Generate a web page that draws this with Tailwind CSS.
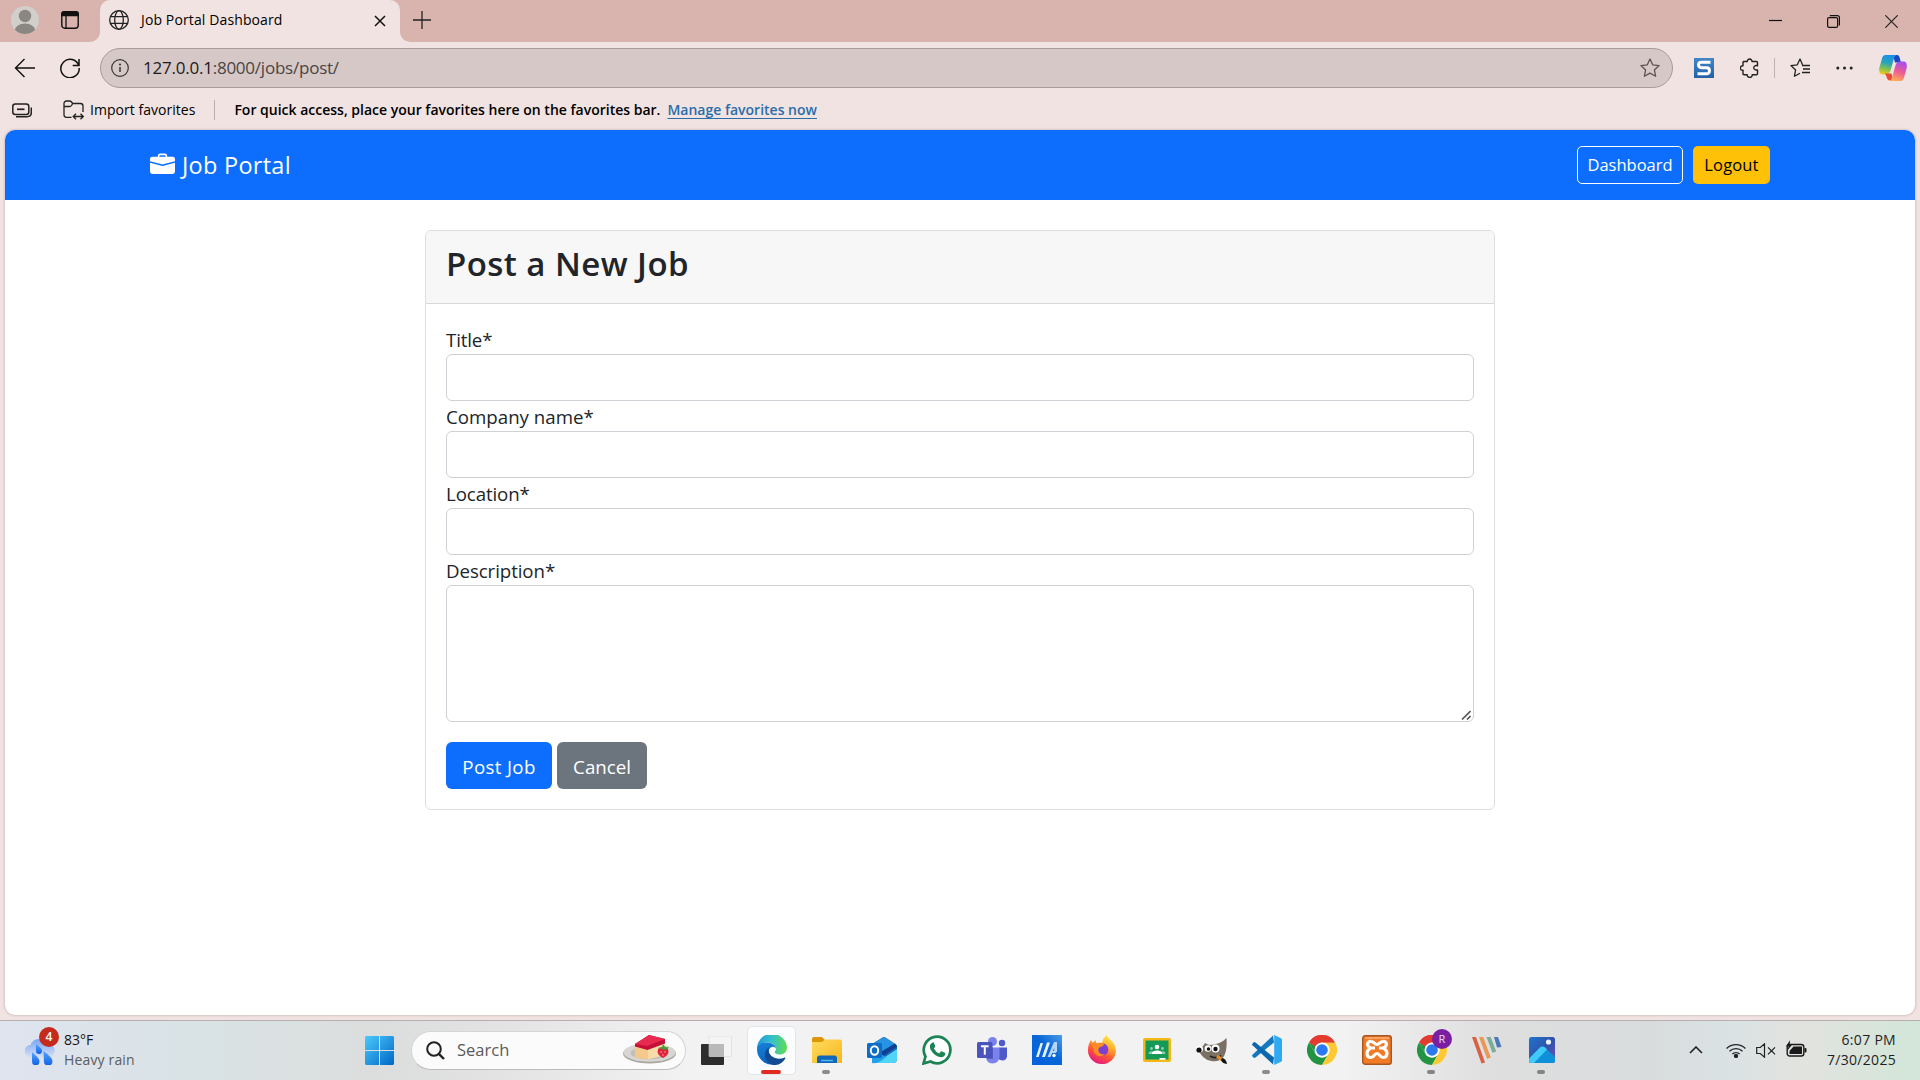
<!DOCTYPE html>
<html lang="en">
<head>
<meta charset="utf-8">
<title>Job Portal Dashboard</title>
<script src="https://cdn.jsdelivr.net/npm/@tailwindcss/browser@4"></script>
</head>
<body class="w-[1920px] h-[1080px] overflow-hidden flex flex-col bg-[#f1e3e1] font-['Open_Sans','Noto_Sans',sans-serif] text-black">

<!-- Shared icon definitions -->
<svg class="hidden">
  <symbol id="chrome" viewBox="0 0 48 48">
    <circle cx="24" cy="24" r="24" fill="#fff"/>
    <path d="M3.2 12A24 24 0 0 1 44.8 12H24a12 12 0 0 0-10.4 6z" fill="#e33b2e"/>
    <path d="M3.2 12A24 24 0 0 0 24 48L34.4 30A12 12 0 0 1 13.6 30z" fill="#229342"/>
    <path d="M44.8 12A24 24 0 0 1 24 48L34.4 30A12 12 0 0 0 24 12z" fill="#fcc934"/>
    <path d="M3.2 12L13.6 30L24 24z" fill="#229342"/>
    <path d="M3.2 12A24 24 0 0 1 44.8 12H24L13.6 18z" fill="#e33b2e"/>
    <circle cx="24" cy="24" r="12" fill="#fff"/><circle cx="24" cy="24" r="9.3" fill="#2b78f0"/>
  </symbol>
</svg>

<!-- Tab strip -->
<header class="h-[42px] shrink-0 flex bg-[#f1e3e1]">
  <div class="w-[100px] flex items-center pl-[11px] gap-[22px] bg-[#d9b3ad] rounded-br-[10px]">
    <svg class="size-7 -mt-[2px]" viewBox="0 0 28 28"><defs><clipPath id="av"><circle cx="14" cy="14" r="14"/></clipPath></defs><circle cx="14" cy="14" r="14" fill="#d2cfcb"/><g clip-path="url(#av)" fill="#8a8783"><circle cx="14" cy="10" r="6.2"/><ellipse cx="14" cy="25" rx="10.5" ry="7.5"/></g></svg>
    <svg class="size-[18px] -mt-[2px]" viewBox="0 0 18 18"><rect x=".8" y=".8" width="16.4" height="16.4" rx="3" fill="none" stroke="#111" stroke-width="1.4"/><path d="M0 5.3V3a3 3 0 0 1 3-3h12a3 3 0 0 1 3 3v2.300z" fill="#111"/><path d="M5 5v12" stroke="#111" stroke-width="1.3"/></svg>
  </div>
  <div class="w-[300px] flex bg-[#d9b3ad]">
    <div class="w-full flex items-center pl-[9px] pr-[14px] bg-[#f1e3e1] rounded-t-[10px]">
      <svg class="size-5 -mt-[3px]" viewBox="0 0 20 20" fill="none" stroke="#222" stroke-width="1.3"><circle cx="10" cy="10" r="9.300"/><ellipse cx="10" cy="10" rx="4.300" ry="9.300"/><path d="M1.500 6.700h17M1.500 13.300h17"/></svg>
      <span class="ml-3 -mt-1 text-[14px] tracking-[0.12px] whitespace-nowrap">Job Portal Dashboard</span>
      <svg class="ml-auto size-[12px] -mt-[1px]" viewBox="0 0 12 12" stroke="#111" stroke-width="1.500"><path d="M1 1l10 10M11 1L1 11"/></svg>
    </div>
  </div>
  <div class="flex-1 flex items-center pl-[13px] pr-[22px] bg-[#d9b3ad] rounded-bl-[10px]">
    <svg class="size-[18px] -mt-[3px]" viewBox="0 0 18 18" stroke="#222" stroke-width="1.300"><path d="M9 0v18M0 9h18"/></svg>
    <div class="ml-auto flex items-center gap-[45px]">
      <svg class="w-[13px] h-[13px]" viewBox="0 0 13 13" stroke="#111" stroke-width="1.200"><path d="M0 5.500h13"/></svg>
      <svg class="w-[13px] h-[13px]" viewBox="0 0 13 13" fill="none" stroke="#111" stroke-width="1.200"><rect x=".6" y="2.600" width="10" height="9.800" rx="1.500"/><path d="M2.800.6h7.600a2 2 0 0 1 2 2v7.800"/></svg>
      <svg class="w-[13px] h-[13px]" viewBox="0 0 13 13" stroke="#222" stroke-width="1.200"><path d="M.3.300l12.400 12.400M12.700.300L.3 12.700"/></svg>
    </div>
  </div>
</header>

<!-- Address bar row -->
<div class="h-[52px] shrink-0 flex items-center pl-[14px]">
  <svg class="w-[21px] h-5" viewBox="0 0 21 20" fill="none" stroke="#111" stroke-width="1.400"><path d="M21 10H1.500M10.500 1L1.500 10l9 9"/></svg>
  <svg class="ml-[25px] w-[20px] h-[20px]" viewBox="0 0 20 20" fill="none" stroke="#111" stroke-width="1.500"><path d="M18.700 7.500A9.200 9.200 0 1 0 19.200 10M19 1v6.500h-6.300"/></svg>
  <div class="ml-5 w-[1573px] h-10 flex items-center rounded-full border border-[#a89b9a] bg-[#d6c8c7] pl-[10px] pr-3">
    <svg class="size-[18px]" viewBox="0 0 18 18" fill="none" stroke="#3a3433" stroke-width="1.200"><circle cx="9" cy="9" r="8.300"/><path d="M9 8v5" stroke-width="1.500"/><circle cx="9" cy="5.500" r=".5"/></svg>
    <span class="ml-[14px] -mt-[1px] text-[17px] tracking-[-0.23px] text-[#4a4443] whitespace-nowrap"><span class="text-[#1c1a1a]">127.0.0.1</span>:8000/jobs/post/</span>
    <svg class="ml-auto size-5" viewBox="0 0 20 20" fill="none" stroke="#5c5453" stroke-width="1.300" stroke-linejoin="round"><path d="M10 1l2.700 5.800 6.400.8-4.700 4.300 1.200 6.300L10 15.100l-5.600 3.100 1.200-6.300L.9 7.600l6.400-.8z"/></svg>
  </div>
  <svg class="ml-[21px] size-5" viewBox="0 0 20 20"><defs><linearGradient id="sg" x2="0" y2="1"><stop stop-color="#4387c8"/><stop offset="1" stop-color="#245fa8"/></linearGradient></defs><rect width="20" height="20" fill="url(#sg)"/><path d="M16.500 4.200H7.500q-3 0-3 2.500t3 3.100h5q3 0 3 3t-3 3H3.500" fill="none" stroke="#fff" stroke-width="2.900"/></svg>
  <svg class="ml-[26px] size-5" viewBox="0 0 20 20" fill="none" stroke="#222" stroke-width="1.400" stroke-linejoin="round"><path d="M3 3.500h4.300C7 .2 12.300.200 12 3.500h4.500q1 0 1 1v3.200c-5-1.200-5 5.300 0 4.200v3.800q0 1-1 1H12.200c.3 3.600-5.200 3.600-5 0H4q-1 0-1-1v-3.500C-.6 12.700-.6 7.500 3 7.700V4.500q0-1 1-1"/></svg>
  <div class="ml-[14px] w-px h-5 bg-[#bfb2b1]"></div>
  <svg class="ml-[15px] w-[21px] h-5" viewBox="0 0 21 20" fill="none" stroke="#222" stroke-width="1.300" stroke-linejoin="round"><path d="M12.500 6.800L10 1 7.300 6.800.9 7.600l4.700 4.300-1.200 6.300L10 15.200M12 7.500h8M13 11h7M12 14.500h8" /></svg>
  <svg class="ml-[25px] w-[17px] h-5" viewBox="0 0 17 20" fill="#222"><circle cx="1.800" cy="10" r="1.500"/><circle cx="8.500" cy="10" r="1.500"/><circle cx="15.200" cy="10" r="1.500"/></svg>
  <svg class="ml-[26px] w-7 h-[26px]" viewBox="0 0 28 26">
    <defs>
      <linearGradient id="c1" x1=".5" x2=".3" y2="1"><stop stop-color="#1a8fe8"/><stop offset=".4" stop-color="#27a5b8"/><stop offset=".75" stop-color="#8fc544"/><stop offset="1" stop-color="#f4ca1d"/></linearGradient>
      <linearGradient id="c2" x1=".6" x2=".3" y2="1"><stop stop-color="#a64df0"/><stop offset=".5" stop-color="#ee5c92"/><stop offset="1" stop-color="#ffb057"/></linearGradient>
    </defs>
    <path d="M14 0h4c2 0 2.500 2 3 4l1 3.500h-6z" fill="#1b46c4"/>
    <path d="M6.500 0h11c-2 1-2.500 3-3.300 6l-2.500 9c-1 3.500-3 4.500-5.700 4.500H3.500C.5 19.500-.3 16.500.3 13L3 3.500C3.500 1.500 4.500 0 6.500 0z" fill="url(#c1)"/>
    <path d="M6 18.500h6.500l1.500 7h-3c-2.300 0-3-2-3.600-4z" fill="#ea4d35"/>
    <path d="M21.500 26h-11c2-1 2.500-3 3.300-6l2.500-9c1-3.500 3-4.500 5.700-4.500h2.500c3 0 3.800 3 3.200 6.500L25 22.500c-.5 2-1.500 3.500-3.500 3.500z" fill="url(#c2)"/>
  </svg>
</div>

<!-- Favorites bar -->
<div class="h-9 shrink-0 flex items-center pl-3 pb-[7px] text-[14px] whitespace-nowrap">
  <svg class="mt-[3px] w-5 h-[15px]" viewBox="0 0 20 15" fill="none" stroke="#222" stroke-width="1.500"><rect x=".8" y="1" width="16" height="10.500" rx="2.500"/><path d="M5 6.300h7.500" stroke-width="1.700"/><path d="M4 13.700h11c3 0 4.300-1.400 4.300-4V4.500"/></svg>
  <svg class="ml-[31px] mt-[2px] w-[21px] h-5" viewBox="0 0 21 20" fill="none" stroke="#222" stroke-width="1.300"><path d="M8.500 17.300H3.500a2.500 2.500 0 0 1-2.500-2.500V3.500A2.500 2.500 0 0 1 3.500 1h3q1.200 0 2 1l1.200 1.500h7.800A2.500 2.500 0 0 1 20 6v6M1 6.500h5.800q1 0 1.700-1l1.200-2M10.500 16.500h9.500M13 13.700l-2.800 2.800L13 19.300M17.500 13.700l2.800 2.800-2.800 2.800"/></svg>
  <span class="ml-[6px] mt-[2px] tracking-[0.03px]">Import favorites</span>
  <div class="ml-[19px] mt-[2px] w-px h-5 bg-[#b9acab]"></div>
  <span class="ml-[19px] mt-[2px] font-semibold tracking-[0px]">For quick access, place your favorites here on the favorites bar.</span>
  <a class="ml-[7px] mt-[2px] font-semibold text-[#2a6dab] underline decoration-1 underline-offset-3">Manage favorites now</a>
</div>

<!-- Web page -->
<main class="mx-[5px] h-[885px] shrink-0 bg-white rounded-[10px] overflow-hidden shadow-[0_0_3px_#b9a5a3]">
  <nav class="h-[70px] flex items-center px-[145px] bg-[#0d6efd] text-white">
    <svg class="w-[25px] h-[25px] -mt-[1px]" viewBox="0 0 16 16" fill="currentColor"><path d="M6.500 1A1.500 1.500 0 0 0 5 2.500V3H1.500A1.500 1.500 0 0 0 0 4.500v1.384l7.614 2.030a1.500 1.500 0 0 0 .772 0L16 5.884V4.500A1.500 1.500 0 0 0 14.500 3H11v-.5A1.500 1.500 0 0 0 9.500 1zm0 1h3a.5.500 0 0 1 .5.500V3H6v-.5a.5.500 0 0 1 .5-.5"/><path d="M0 12.500A1.500 1.500 0 0 0 1.500 14h13a1.500 1.500 0 0 0 1.500-1.500V6.850L8.129 8.947a.5.500 0 0 1-.258 0L0 6.850z"/></svg>
    <span class="ml-[7px] mt-[2px] text-[23.500px] tracking-[0.27px]">Job Portal</span>
    <a class="ml-auto w-[106px] h-[38px] flex items-center justify-center rounded-[5px] border border-white text-[16.500px] pt-px">Dashboard</a>
    <a class="ml-[10px] w-[77px] h-[38px] flex items-center justify-center rounded-[5px] bg-[#ffc107] text-black text-[16.500px] tracking-[0.15px] pt-px">Logout</a>
  </nav>
  <section class="mt-[30px] mx-auto w-[1070px] h-[580px] rounded-[6px] border border-[#dedfe0] overflow-hidden text-[#212529]">
    <div class="h-[73px] px-5 pt-[9px] bg-[#f7f7f7] border-b border-[#d8d9da]">
      <h2 class="text-[33px] leading-[48px] font-semibold tracking-[0.45px]">Post a New Job</h2>
    </div>
    <form class="px-5 pt-5 text-[18.700px]">
      <label class="block h-[30px] leading-[32px] tracking-[-0.15px]">Title*</label>
      <input class="block w-full h-[47px] rounded-[6px] border border-[#ced2d6]">
      <label class="block h-[30px] leading-[32px]">Company name*</label>
      <input class="block w-full h-[47px] rounded-[6px] border border-[#ced2d6]">
      <label class="block h-[30px] leading-[32px] tracking-[-0.1px]">Location*</label>
      <input class="block w-full h-[47px] rounded-[6px] border border-[#ced2d6]">
      <label class="block h-[30px] leading-[32px] tracking-[-0.08px]">Description*</label>
      <div class="w-full h-[137px] flex items-end justify-end rounded-[6px] border border-[#ced2d6] pr-[2px] pb-[1px]">
        <svg class="w-[10px] h-[10px]" viewBox="0 0 10 10" stroke="#555" stroke-width="1.600"><path d="M1 9.500L9.500 1M6 9.500l3.500-3.500"/></svg>
      </div>
      <div class="mt-5 flex gap-[5px] text-white">
        <button type="button" class="w-[106px] h-[47px] rounded-[6px] bg-[#0d6efd] pt-[3px] tracking-[0.35px]">Post Job</button>
        <button type="button" class="w-[90px] h-[47px] rounded-[6px] bg-[#6c757d] pt-[3px]">Cancel</button>
      </div>
    </form>
  </section>
</main>
<div class="h-[5px] shrink-0"></div>

<!-- Taskbar -->
<footer class="h-[60px] shrink-0 flex items-center shadow-[inset_0_1px_0_#b5afaf] bg-[linear-gradient(90deg,#dfe4ef_0%,#d9e3e5_10%,#dcdddd_20%,#e3e3e3_26%,#f2f2f3_36%,#f2f2f2_70%,#dedede_78%,#d9dcdd_86%,#dae2e4_90%,#e2e3df_94%,#d2e6d8_100%)]">
  <div class="relative w-[352px] h-full flex items-center pl-[25px] gap-[9px]">
    <svg class="w-[30px] h-[28px] mt-[2px]" viewBox="0 0 30 28"><defs><linearGradient id="cl" x2="0" y2="1"><stop stop-color="#7aa5f2"/><stop offset="1" stop-color="#d3def8"/></linearGradient><linearGradient id="dr" x2="0" y2="1"><stop stop-color="#56a3ff"/><stop offset="1" stop-color="#0f62e8"/></linearGradient></defs><path d="M6 20a6 6 0 0 1-.5-12A9 9 0 0 1 22 7a6.500 6.500 0 0 1 2 13z" fill="url(#cl)"/><g fill="url(#dr)"><path d="M7 15c3 3 7.500 6 7.500 9.500a3.700 3.700 0 0 1-7.500 0z"/><path d="M18.500 14c3.500 3 9 6.500 9 10.500a4.300 4.300 0 0 1-8.600 0z"/><path d="M11 7c3 2.500 6 4.500 6 7a3 3 0 0 1-6 0z"/></g></svg>
    <span class="absolute left-[39px] top-[7px] size-5 rounded-full bg-[#c42b1c] text-white text-[12px] font-semibold leading-5 text-center">4</span>
    <div class="text-[14px] leading-5 -mt-[1px]">
      <div class="text-[#151515]">83°F</div>
      <div class="text-[#5b5e60] tracking-[0.15px]">Heavy rain</div>
    </div>
  </div>
  <div class="w-[55px] flex justify-center">
    <svg class="size-[29px]" viewBox="0 0 29 29"><defs><linearGradient id="wn" x2="1" y2="1"><stop stop-color="#4cc9fb"/><stop offset="1" stop-color="#0067c7"/></linearGradient></defs><path d="M1 0h13v14H0V1zM15 0h13l1 1v13H15zM0 15h14v14H1l-1-1zM15 15h14v13l-1 1H15z" fill="url(#wn)"/></svg>
  </div>
  <div class="ml-1 w-[275px] h-[39px] flex items-center pl-[14px] pr-[9px] rounded-full border border-[#d5d5d5] border-b-[#bcbcbc] bg-[#fbfbfb]">
    <svg class="size-[19px]" viewBox="0 0 19 19" fill="none" stroke="#222" stroke-width="2"><circle cx="8" cy="8" r="6.800"/><path d="M12.800 12.800l5.200 5.200" stroke-width="2.400"/></svg>
    <span class="ml-[12px] text-[16.500px] text-[#5a5a5a]">Search</span>
    <svg class="ml-auto w-[53px] h-[30px]" viewBox="0 0 53 30"><ellipse cx="26.500" cy="18.500" rx="26.500" ry="10" fill="#aaa69f"/><ellipse cx="26.500" cy="17.500" rx="26" ry="9.300" fill="#d8d6d2"/><ellipse cx="26.500" cy="18" rx="19" ry="6.500" fill="#c2bfb8"/><path d="M12 10l13 4v10.500L12 22.500z" fill="#f4c98a"/><path d="M25 14l17-6v12l-17 4.500z" fill="#f8dca8"/><path d="M12 9L26 0l16 4v4.500L24.500 15 12 11.500z" fill="#c40f38"/><path d="M12 9L26 0l16 4-18 7z" fill="#e82a50"/><path d="M35 14q5-4 10 0 2 6-5 9-7-3-5-9z" fill="#dd2440"/><path d="M35 13l4-1 1-3 2 3 4 .5-3 2.500-4-1z" fill="#459b3c"/><g fill="#ffb3a0"><circle cx="38" cy="17" r=".7"/><circle cx="42" cy="17" r=".7"/><circle cx="40" cy="20" r=".7"/></g></svg>
  </div>

  <div class="ml-[3px] h-full flex items-center">
    <!-- Task view -->
    <div class="w-[55px] h-full flex items-center justify-center"><svg class="w-[31px] h-[29px]" viewBox="0 0 31 29"><rect x="0" y="8" width="23" height="21" rx="1" fill="#2d2d2d"/><rect x="8" y="0" width="22.500" height="20.500" rx="1" fill="#f4f4f4" stroke="#d8d8d8" stroke-width=".6"/><path d="M8 8h15v12.500H8z" fill="#b9b9b9"/></svg></div>
    <!-- Edge -->
    <div class="relative w-[55px] h-full flex items-center justify-center">
      <div class="size-[49px] flex items-center justify-center rounded-[5px] border border-[#e3e5e6] bg-[#fafcfd]">
        <svg class="size-[30px]" viewBox="0 0 30 30"><defs><linearGradient id="e1" y1=".3" x2="1" y2=".4"><stop stop-color="#2693d8"/><stop offset=".45" stop-color="#31bfd0"/><stop offset="1" stop-color="#5fdb56"/></linearGradient><linearGradient id="e2" x2=".4" y2="1"><stop stop-color="#1683d8"/><stop offset="1" stop-color="#0b62bd"/></linearGradient></defs><path d="M0 15A15 15 0 0 1 30 12.500c0 4.500-3.300 7-7 7-3.500 0-5.300-1-5.300-2.200 0-1 1.300-1.300 1.300-3.500C19 10 15 7.500 10.500 7.500 5 7.500 1 11 0 15z" fill="url(#e1)"/><path d="M0 15C0 10 5 6.800 10.500 7.500 16 8 19 10.800 19 13.500c-2-3.300-7-1.500-7.500 3-.6 6 4.500 12 11 11A15 15 0 0 1 0 15z" fill="url(#e2)"/><path d="M11.700 12.500C5 17.500 8 29 17 30c5 .3 9-2.500 11.300-6.500.4-.8-.3-1.200-1-.8C20 26 11 21.500 11.700 14z" fill="#134a92"/></svg>
      </div>
      <i class="absolute left-[17px] bottom-[6px] w-5 h-1 rounded-full bg-[#e22b20]"></i>
    </div>
    <!-- Explorer -->
    <div class="relative w-[55px] h-full flex items-center justify-center">
      <svg class="w-[30px] h-[28px]" viewBox="0 0 30 28"><defs><linearGradient id="fo" x2="1" y2="1"><stop stop-color="#ffdc61"/><stop offset="1" stop-color="#f7b61b"/></linearGradient></defs><path d="M0 3q0-2 2-2h8l4 4v6H0z" fill="#dc9708"/><path d="M0 6h10l3-2.500h15q2 0 2 2V27H0z" fill="url(#fo)"/><path d="M5 27v-5q0-2.500 2.500-2.500h15Q25 19.500 25 22v5z" fill="#0e67b8"/><path d="M9 24.500h12" stroke="#56b7ee" stroke-width="1.500"/></svg>
      <i class="absolute left-[23px] bottom-[6px] w-2 h-1 rounded-full bg-[#8b8b8b]"></i>
    </div>
    <!-- Outlook -->
    <div class="w-[55px] h-full flex items-center justify-center"><svg class="w-[30px] h-[28px]" viewBox="0 0 30 28"><path d="M5 8L15.500 1.600q1.500-1 3 0L29 8.500q1 .7 1 2V23q0 4-4 4H9q-4 0-4-4z" fill="#1666b9"/><path d="M6 8l9.500-6q1.500-1 3 0l9 5.500L12 18z" fill="#2694e2"/><path d="M30 10v13q0 4-4 4H9L30 13z" fill="#52d4f7"/><path d="M5 27q7 1 14-6l-7-4-7 3z" fill="#22a1e9"/><path d="M12 17L28 7.500l2 3-13 9z" fill="#103f91"/><rect y="7" width="15" height="15" rx="1.500" fill="#0f6cc6"/><ellipse cx="7.500" cy="14.500" rx="3.700" ry="4.300" fill="none" stroke="#fff" stroke-width="2"/></svg></div>
    <!-- WhatsApp -->
    <div class="w-[55px] h-full flex items-center justify-center"><svg class="size-[30px]" viewBox="0 0 30 30"><path d="M1.500 28.500l2-7a13.300 13.300 0 1 1 5 5z" fill="#fff" stroke="#1d8355" stroke-width="2.700"/><path d="M10.500 7.500q1-.5 1.500.6l1.200 2.900q.3.800-1.300 2.400 1.800 3.700 5.400 5l1.500-1.800q.5-.6 1.300-.2l2.800 1.400q.8.400.4 1.800-1 2.800-4.300 2.600-6.500-.8-10.500-7.800-2-4.700 2-6.900z" fill="#1d8355"/></svg></div>
    <!-- Teams -->
    <div class="w-[55px] h-full flex items-center justify-center"><svg class="w-[30px] h-[27px]" viewBox="0 0 30 27"><circle cx="25" cy="6" r="3.200" fill="#5059c9"/><path d="M22 10.500h8v9q-1 4.500-5 4l-3-1z" fill="#5059c9"/><circle cx="15.500" cy="4.500" r="4.500" fill="#7b83eb"/><path d="M9 10.500h13.500V20q-1 6.500-7 6.500T9 20z" fill="#7b83eb"/><path d="M9 10.500h7V22h-6z" fill="#5861ca"/><rect y="5" width="15.500" height="16" rx="1.500" fill="#4b53bc"/><path d="M4 9.300h7.600M7.800 9.300v8.500" stroke="#fff" stroke-width="2"/></svg></div>
    <!-- MyASUS -->
    <div class="w-[55px] h-full flex items-center justify-center"><svg class="size-[30px]" viewBox="0 0 30 30"><defs><linearGradient id="my" x1="1" x2="0" y2="1"><stop stop-color="#4b9ce5"/><stop offset=".45" stop-color="#0866d8"/><stop offset="1" stop-color="#0761dc"/></linearGradient></defs><rect width="30" height="30" fill="url(#my)"/><path d="M4 22L8.500 8h2.500L6.700 22zM10 22l5-14.500h3L13 22z" fill="#e6f1fc"/><path d="M15.500 22L22 7h3v10h-2.800v-4L18.500 22z" fill="#b5d6f7"/><path d="M20 16h4v2h-4z" fill="#b5d6f7"/><circle cx="22" cy="20.500" r="1.700" fill="#fff"/></svg></div>
    <!-- Firefox -->
    <div class="w-[55px] h-full flex items-center justify-center"><svg class="size-[30px]" viewBox="0 0 30 30"><defs><linearGradient id="ff" x1=".8" x2=".3" y2="1"><stop stop-color="#fff14b"/><stop offset=".35" stop-color="#ffb02a"/><stop offset=".65" stop-color="#ff5634"/><stop offset="1" stop-color="#e31587"/></linearGradient></defs><path d="M1 15C1 11 2 8 4 5l1.500 3 3-3 .8 3.500Q12 7 15 8q1-5 4.500-8c1.500 4 9.500 7 9.500 16a14 13.500 0 0 1-28-1z" fill="url(#ff)"/><circle cx="15" cy="14.500" r="6.300" fill="#7d3ed5"/><path d="M5 7.500q5 1.500 11 .8 2 1.500-.5 3-4 .5-4.200 3.700.5 5 7 4.200Q11 24 7 17z" fill="#ff8b23"/></svg></div>
    <!-- Classroom -->
    <div class="w-[55px] h-full flex items-center justify-center"><svg class="w-[28px] h-6" viewBox="0 0 28 24"><rect width="28" height="24" rx="2" fill="#f3b815"/><rect x="2.500" y="2.500" width="23" height="19" fill="#159957"/><g fill="#fff"><circle cx="14" cy="9" r="2.300"/><path d="M8.500 15.500c0-4 11-4 11 0v.5h-11z"/><rect x="16.500" y="20" width="6" height="1.800"/></g><g fill="#8bd0a9"><circle cx="8.500" cy="10.500" r="1.400"/><circle cx="19.500" cy="10.500" r="1.400"/><path d="M5.500 16q.3-3.500 4-2.500L8 16zM22.500 16q-.3-3.500-4-2.500L20 16z"/></g></svg></div>
    <!-- GIMP -->
    <div class="w-[55px] h-full flex items-center justify-center"><svg class="w-[31px] h-[27px]" viewBox="0 0 31 27"><path d="M30.500 1q1 15-4 20-4 4-11 3Q6 23 1 10q5 2 8-4l4 2Q24 8 30.500 1z" fill="#7a7064"/><g fill="#fff"><circle cx="3.500" cy="12" r="3.500"/><circle cx="12" cy="11.500" r="3.300"/><circle cx="19.500" cy="11.500" r="4"/></g><g fill="#111"><circle cx="3" cy="13" r="2.600"/><circle cx="12.500" cy="12" r="1.800"/><circle cx="19.500" cy="12" r="2.200"/></g><path d="M14 19q6 3.500 11-.5" fill="none" stroke="#222" stroke-width="1.500"/><path d="M21 19l5 4" stroke="#e58d26" stroke-width="3"/><path d="M26 21q4 .5 5 6-5-.5-6-4z" fill="#111"/></svg></div>
    <!-- VS Code -->
    <div class="relative w-[55px] h-full flex items-center justify-center">
      <svg class="size-[30px]" viewBox="0 0 30 30"><path d="M22 7.500L3.500 22.500q-1 .8-1.700.2L.5 21.500q-.8-.8 0-1.700L21 .6z" fill="#1479bf"/><path d="M22 22.500L3.500 7.500q-1-.8-1.700-.2L.5 8.500q-.8.800 0 1.700L21 29.400z" fill="#0c69ad"/><path d="M21 .6q.7-.7 1.700-.3L29 3.300q1 .5 1 1.500v20.400q0 1-1 1.500l-6.300 3q-1 .4-1.700-.3 1.200.8 1.200-.9V1.500q0-1.700-1.200-.9z" fill="#2eaaf3"/></svg>
      <i class="absolute left-[23px] bottom-[6px] w-2 h-1 rounded-full bg-[#8b8b8b]"></i>
    </div>
    <!-- Chrome -->
    <div class="w-[55px] h-full flex items-center justify-center"><svg class="size-[30px]"><use href="#chrome"/></svg></div>
    <!-- XAMPP -->
    <div class="w-[55px] h-full flex items-center justify-center"><svg class="size-[30px]" viewBox="0 0 30 30"><rect x=".7" y=".7" width="28.600" height="28.600" rx="2.500" fill="#f17a26" stroke="#a95722" stroke-width="1.400"/><path d="M3 3h24" stroke="#f9b27c" stroke-width="1.500"/><path d="M9 13c-5-2-4-7 0-6.500 3 .2 4 3 6 3s3-2.800 6-3c4-.5 5 4.500 0 6.500 5.500 2.500 5 9.500 0 9.500-3.500 0-3-4-6-4s-2.500 4-6 4c-5 0-5.500-7 0-9.500zM9 13h4M21 13h-4" fill="none" stroke="#fff" stroke-width="3.200"/></svg></div>
    <!-- Chrome, second profile -->
    <div class="relative w-[55px] h-full flex items-center justify-center">
      <svg class="size-[30px]"><use href="#chrome"/></svg>
      <span class="absolute left-[28px] top-[9px] size-5 rounded-full bg-[#7b1fa2] text-[#ecd9f3] text-[11px] leading-5 text-center">R</span>
      <i class="absolute left-[23px] bottom-[6px] w-2 h-1 rounded-full bg-[#858585]"></i>
    </div>
    <!-- Striped app -->
    <div class="w-[55px] h-full flex items-center justify-center"><svg class="w-[30px] h-[28px]" viewBox="0 0 30 28"><path d="M0 1h4l9 25.500-3.500 1z" fill="#d76145"/><path d="M7 1h4.200l7.600 20.500-3.600 1.500z" fill="#e79a56"/><path d="M14.500 1h4.200l5.500 14.500-3.700 1.300z" fill="#7cab98"/><path d="M22 1h4l3.500 10-4.500.5z" fill="#4b78b9"/></svg></div>
    <!-- Photos -->
    <div class="relative w-[55px] h-full flex items-center justify-center">
      <svg class="w-[26px] h-[26px]" viewBox="0 0 26 26"><defs><linearGradient id="ph" x2="1" y2="1"><stop stop-color="#1b77ce"/><stop offset=".5" stop-color="#3352aa"/><stop offset="1" stop-color="#6a51ba"/></linearGradient><clipPath id="pc"><rect width="26" height="26" rx="2.500"/></clipPath></defs><g clip-path="url(#pc)"><rect width="26" height="26" fill="url(#ph)"/><path d="M0 22L11 10.500q2.500-2 5 0L26 20v6H0z" fill="#108fdb"/><path d="M0 21.500L11 10.500q2.500-2 5 0l2 2L5 26H0z" fill="#3fcaf8"/><circle cx="19.500" cy="5" r="2.600" fill="#e9f4ff"/></g></svg>
      <i class="absolute left-[23px] bottom-[6px] w-2 h-1 rounded-full bg-[#858585]"></i>
    </div>
  </div>

  <!-- System tray -->
  <div class="ml-auto pr-6 flex items-center">
    <svg class="w-[14px] h-2" viewBox="0 0 14 8" fill="none" stroke="#222" stroke-width="1.600"><path d="M1 7l6-6 6 6"/></svg>
    <svg class="ml-[23px] w-5 h-[15px]" viewBox="0 0 20 15" fill="none" stroke="#222" stroke-width="1.300"><path d="M.6 5.500a13.500 13.500 0 0 1 18.800 0M3.500 8.300a9.300 9.300 0 0 1 13 0M6.300 11a5.400 5.400 0 0 1 7.400 0"/><circle cx="10" cy="13" r="1.500" fill="#222"/></svg>
    <svg class="ml-[10px] w-5 h-[15px]" viewBox="0 0 20 15" fill="none" stroke="#222" stroke-width="1.200"><path d="M.7 4.500h3.600L8.500.8v13.400L4.300 10.500H.7zM12 4.300l7 7M19 4.300l-7 7"/></svg>
    <svg class="ml-[10px] w-[21px] h-[17px] -mt-[3px]" viewBox="0 0 21 17"><rect x="1.200" y="4.500" width="16.600" height="11.500" rx="2.500" fill="none" stroke="#1a1a1a" stroke-width="1.400"/><path d="M7.500 6.500H16V14H3.500v-3zM18.500 8h1q1 0 1 1v2.500q0 1-1 1h-1zM4 .3L0 6.300h2.500L1.500 10.500 6 4.700H3.700z" fill="#1a1a1a"/></svg>
    <div class="ml-[19px] -mt-px w-[70px] text-right text-[14px] leading-5 tracking-[0.3px] text-[#1f1f1f] whitespace-nowrap">
      <div>6:07 PM</div><div>7/30/2025</div>
    </div>
  </div>
</footer>
</body>
</html>
